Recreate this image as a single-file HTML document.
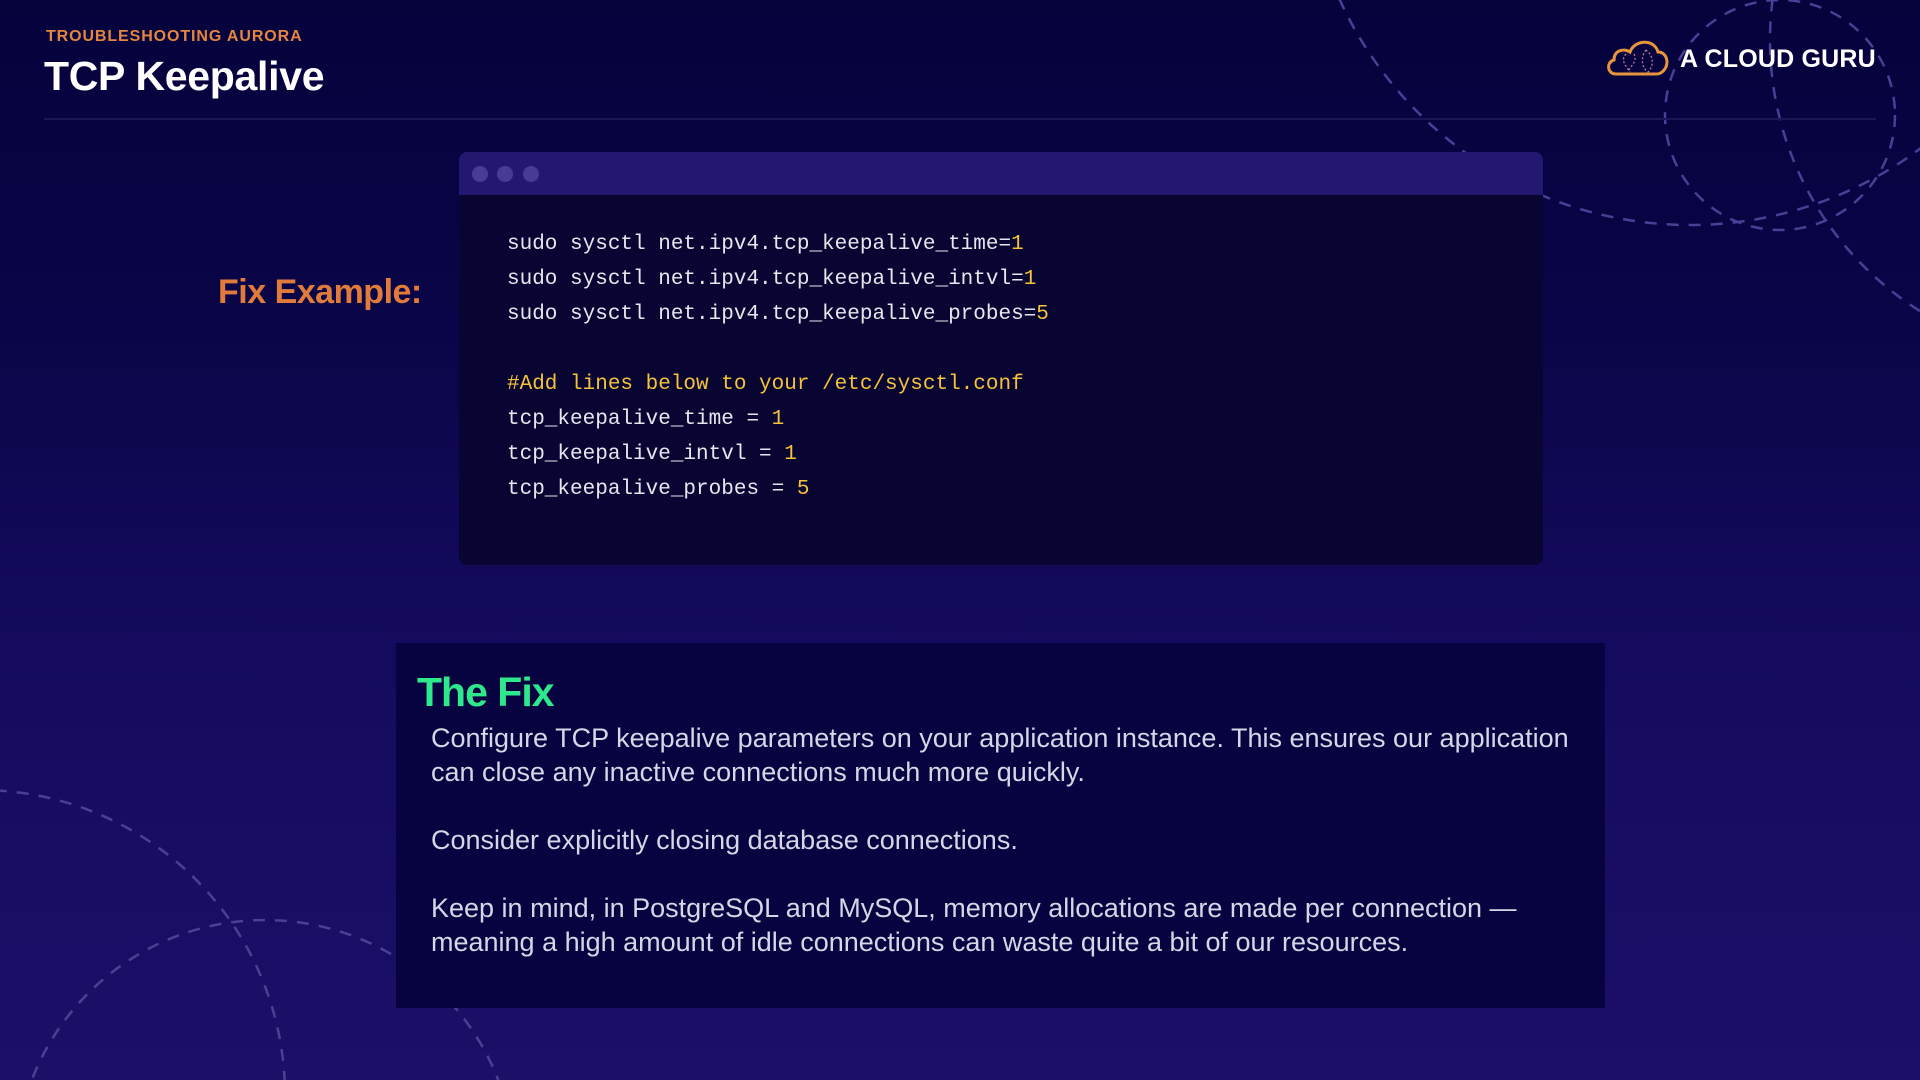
<!DOCTYPE html>
<html><head><meta charset="utf-8"><style>
*{margin:0;padding:0;box-sizing:border-box}
html,body{width:1920px;height:1080px;overflow:hidden}
body{position:relative;font-family:"Liberation Sans",sans-serif;
background:linear-gradient(180deg,#05023c 0%,#0a0548 30%,#140b5e 60%,#1b0f68 100%);}
.abs{position:absolute}
.sub{left:46px;top:28px;font-size:16px;font-weight:bold;color:#e58540;letter-spacing:0.9px}
.title{left:44px;top:53px;font-size:41px;font-weight:bold;color:#fff;letter-spacing:-0.3px}
.rule{left:44px;top:118px;width:1832px;height:2px;background:#1c1658}
.brand{left:1680px;top:45px;font-size:25px;font-weight:bold;color:#fff;letter-spacing:0.2px}
.win{left:459px;top:152px;width:1084px;height:413px;background:#090532;border-radius:8px;overflow:hidden}
.bar{height:43px;background:#231870}
.dot{position:absolute;top:166px;width:16px;height:16px;border-radius:50%;background:#473b95}
.code{left:507px;top:227px;font-family:"Liberation Mono",monospace;font-size:21px;line-height:35px;color:#e6e6ee;white-space:pre}
.y{color:#f4c23c}
.fixex{left:218px;top:273px;font-size:34px;font-weight:bold;color:#e07b3c;letter-spacing:-0.5px}
.box{left:396px;top:643px;width:1209px;height:365px;background:#070340}
.fixt{left:417px;top:669px;font-size:41px;font-weight:bold;color:#2ee88c;letter-spacing:-1px}
.txt{left:431px;top:721px;font-size:27px;line-height:34px;color:#d6d6e6;white-space:pre}
</style></head><body>
<svg class="abs" style="left:0;top:0" width="1920" height="1080">
<g fill="none" stroke="#4a3f95" stroke-width="2.5" stroke-dasharray="12 10">
<circle cx="-20" cy="1095" r="305"/>
<circle cx="265" cy="1170" r="250"/>
<circle cx="1780" cy="115" r="115"/>
<circle cx="1690" cy="-160" r="385"/>
<circle cx="2090" cy="40" r="320"/>
</g>
</svg>
<div class="abs sub">TROUBLESHOOTING AURORA</div>
<div class="abs title">TCP Keepalive</div>
<div class="abs rule"></div>
<svg class="abs" style="left:1604px;top:36px" width="66" height="42" viewBox="0 0 66 42">
<path d="M12 38 C3 38 2 26 10 24 C10 14 20 12 26 16 C30 4 50 2 54 16 C64 16 66 30 58 36 C56 38 54 38 52 38 Z" fill="none" stroke="#e8953c" stroke-width="3"/>
<g fill="none" stroke="#c07a90" stroke-width="1.3" stroke-dasharray="2 2">
<path d="M22 18 C16 24 22 30 26 36 M30 18 C34 26 26 30 24 36"/>
<path d="M42 14 C36 22 38 32 44 36 C50 30 50 20 42 14"/>
</g>
</svg>
<div class="abs brand">A CLOUD GURU</div>
<div class="abs win"><div class="bar"></div></div>
<div class="dot" style="left:472px"></div>
<div class="dot" style="left:497px"></div>
<div class="dot" style="left:523px"></div>
<div class="abs code">sudo sysctl net.ipv4.tcp_keepalive_time=<span class="y">1</span>
sudo sysctl net.ipv4.tcp_keepalive_intvl=<span class="y">1</span>
sudo sysctl net.ipv4.tcp_keepalive_probes=<span class="y">5</span>

<span class="y">#Add lines below to your /etc/sysctl.conf</span>
tcp_keepalive_time = <span class="y">1</span>
tcp_keepalive_intvl = <span class="y">1</span>
tcp_keepalive_probes = <span class="y">5</span></div>
<div class="abs fixex">Fix Example:</div>
<div class="abs box"></div>
<div class="abs fixt">The Fix</div>
<div class="abs txt">Configure TCP keepalive parameters on your application instance. This ensures our application
can close any inactive connections much more quickly.

Consider explicitly closing database connections.

Keep in mind, in PostgreSQL and MySQL, memory allocations are made per connection —
meaning a high amount of idle connections can waste quite a bit of our resources.</div>
</body></html>
